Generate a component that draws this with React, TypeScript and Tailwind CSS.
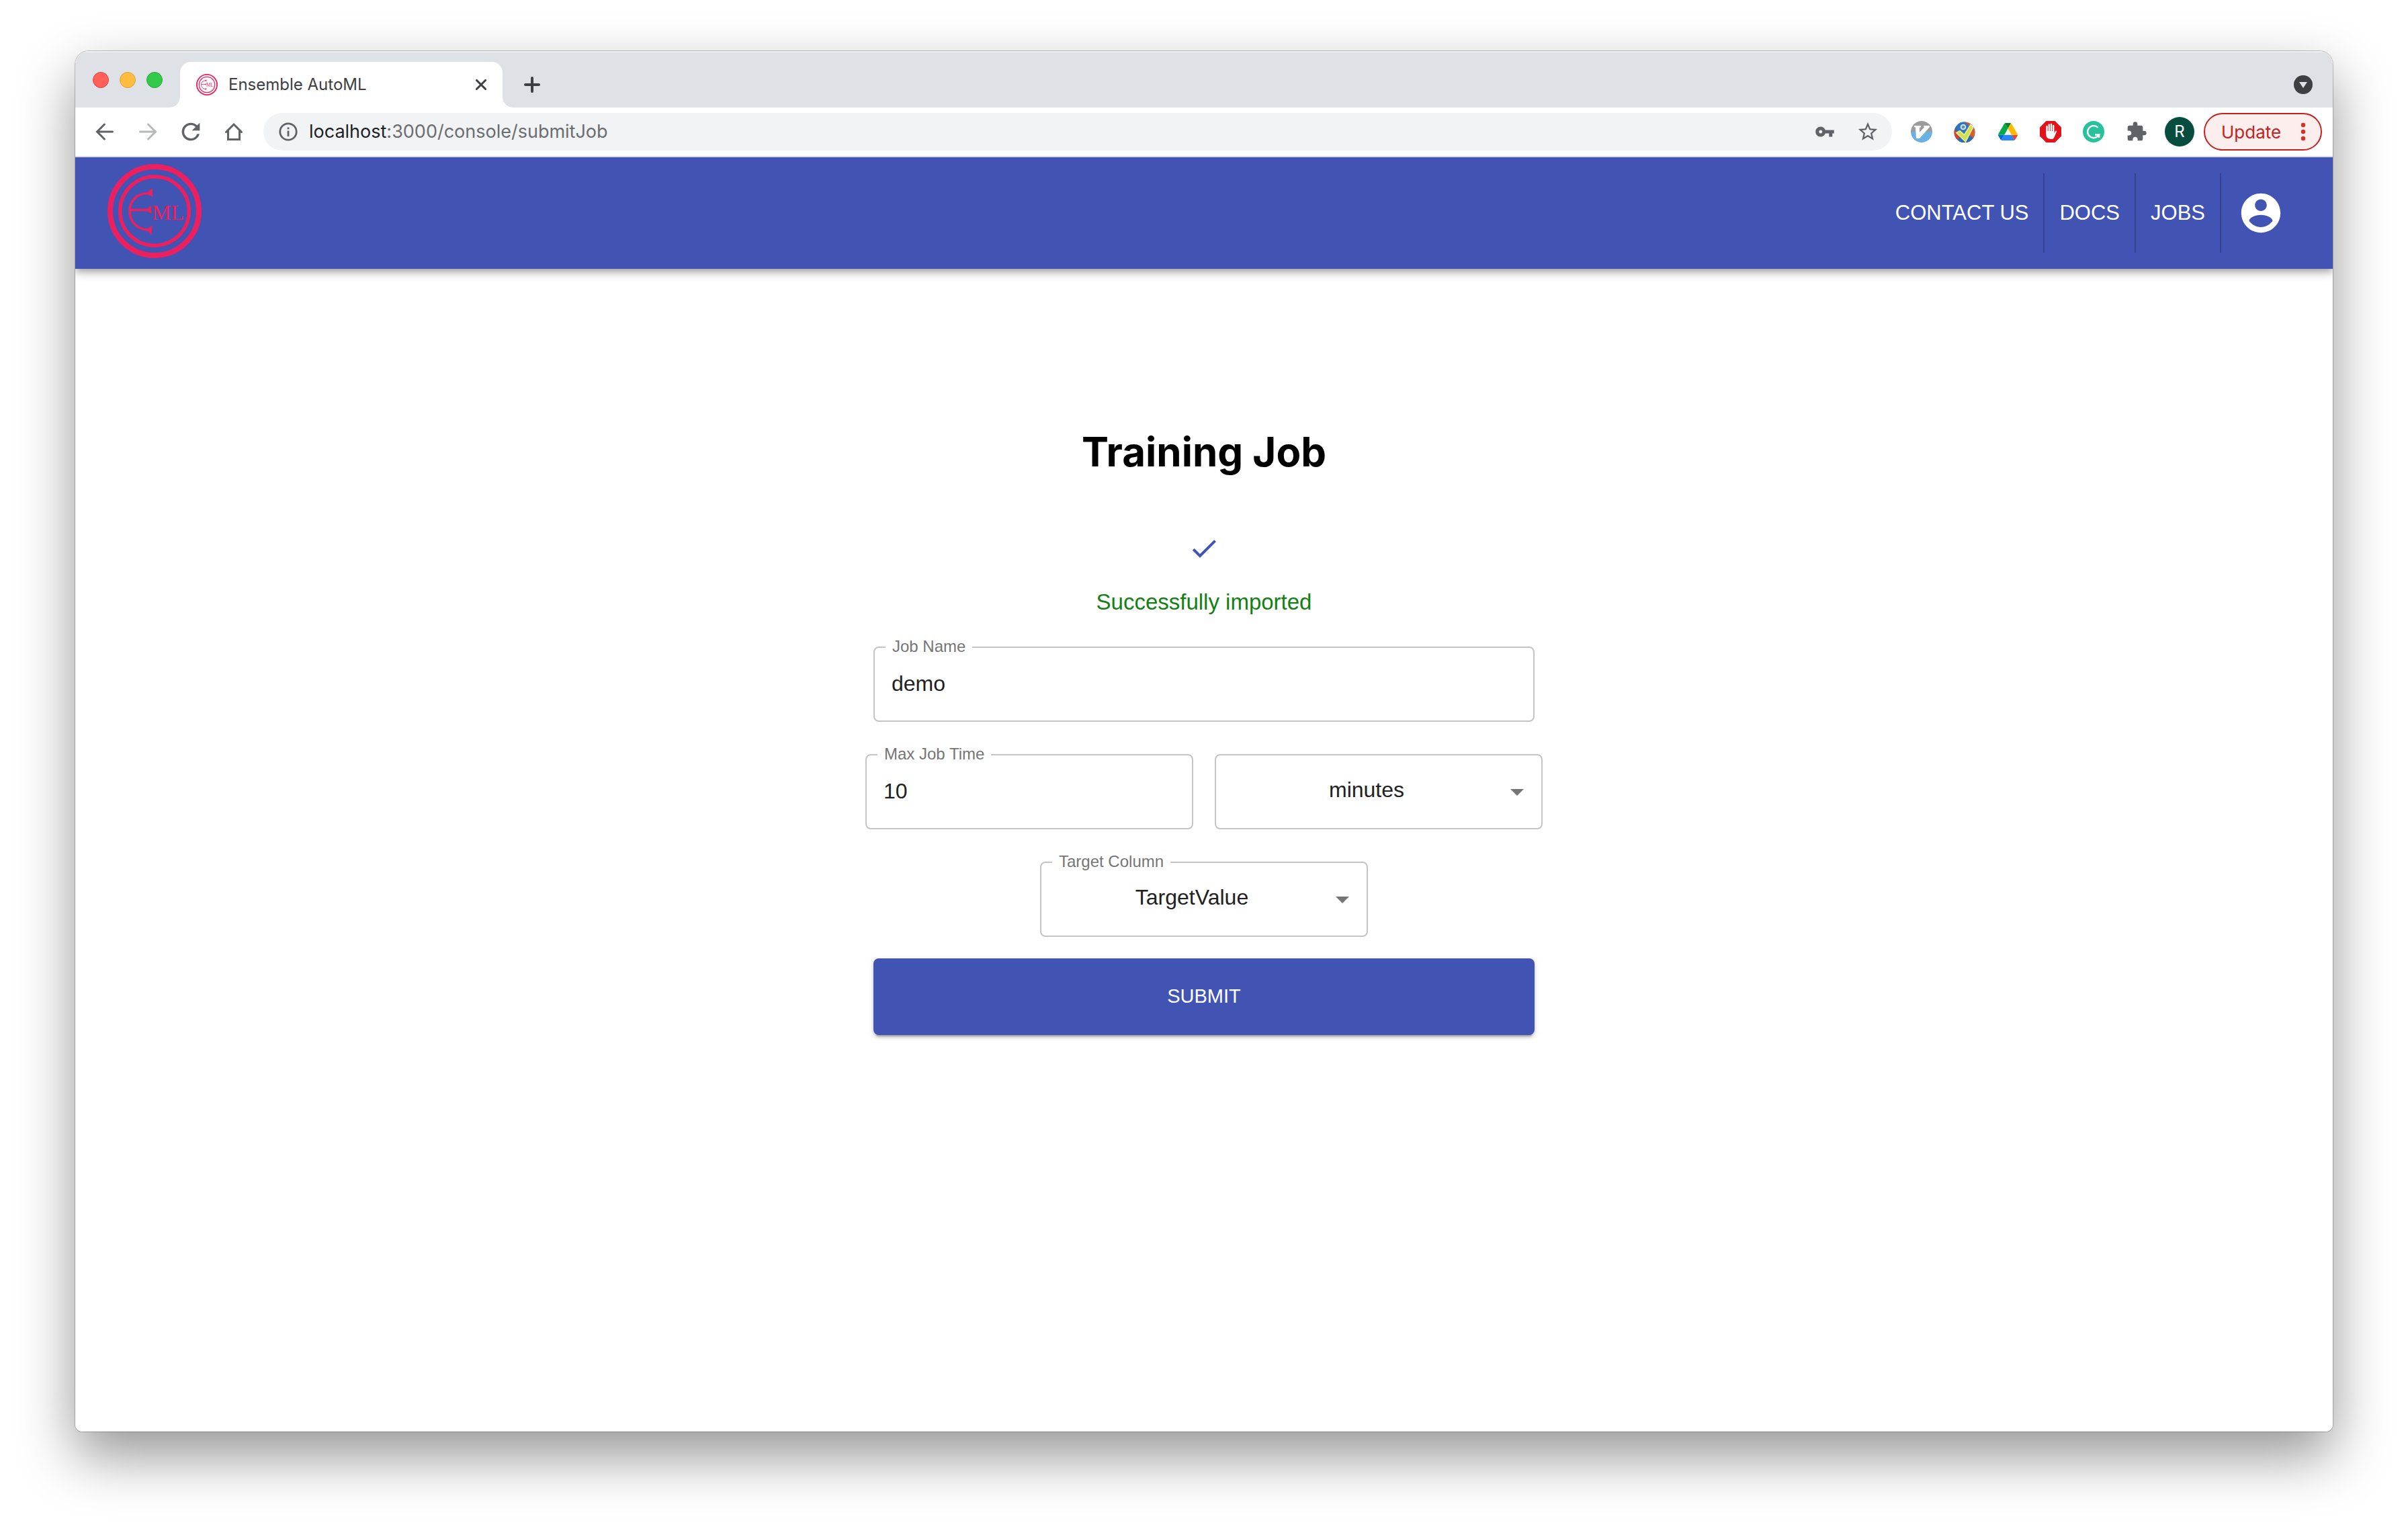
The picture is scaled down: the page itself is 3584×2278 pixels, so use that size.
import { useState } from "react";
import type { ReactNode } from "react";

const EnsembleLogo = ({ className }: { className: string }) => (
  <svg viewBox="0 0 140 140" className={className} fill="none" stroke="#ec205f" aria-label="Ensemble AutoML">
    <circle cx="70" cy="70" r="66" strokeWidth="8" />
    <circle cx="70" cy="70" r="51.300" strokeWidth="5.500" />
    <path d="M61 43.500C42 43.500 33 56 33 70s9 27 27 28" strokeWidth="3.600" />
    <path d="M34 68.500h26" strokeWidth="3.600" />
    <path d="M56 43.500l5-2 5-5 1 12-5-3zM55 68.500l5-2 4-4 1 11-5-3zM55 98l6-2 5-4-1 13-4-5z" fill="#ec205f" strokeWidth="1" />
    <text
      x="66"
      y="83"
      fontSize="32"
      fill="#ec205f"
      stroke="none"
      className="font-['Liberation_Serif',serif]"
    >
      ML
    </text>
  </svg>
);

const Glyph = ({ d, className }: { d: string; className: string }) => (
  <svg viewBox="0 0 24 24" fill="currentColor" className={className} aria-hidden="true">
    <path d={d} />
  </svg>
);

const paths = {
  reload:
    "M17.650 6.350A7.958 7.958 0 0 0 12 4a8 8 0 1 0 7.730 10h-2.080A5.990 5.990 0 0 1 12 18a6 6 0 1 1 0-12c1.660 0 3.140.690 4.220 1.780L13 11h7V4l-2.350 2.350z",
  key: "M12.650 10C11.830 7.670 9.610 6 7 6c-3.310 0-6 2.690-6 6s2.690 6 6 6c2.610 0 4.830-1.670 5.650-4H17v4h4v-4h2v-4H12.650zM7 14c-1.100 0-2-.900-2-2s.900-2 2-2 2 .900 2 2-.900 2-2 2z",
  star: "M22 9.240l-7.190-.620L12 2 9.190 8.630 2 9.240l5.460 4.730L5.820 21 12 17.270 18.180 21l-1.630-7.030L22 9.240zM12 15.400l-3.760 2.270 1-4.280-3.320-2.880 4.380-.380L12 6.100l1.710 4.040 4.380.380-3.320 2.880 1 4.280L12 15.400z",
  puzzle:
    "M20.500 11H19V7c0-1.100-.900-2-2-2h-4V3.500a2.500 2.500 0 0 0-5 0V5H4c-1.100 0-1.990.900-1.990 2v3.800H3.500a2.700 2.700 0 0 1 0 5.400H2V20c0 1.100.900 2 2 2h3.800v-1.500a2.700 2.700 0 0 1 5.400 0V22H17c1.100 0 2-.900 2-2v-4h1.500a2.500 2.500 0 0 0 0-5z",
  account:
    "M12 2C6.480 2 2 6.480 2 12s4.480 10 10 10 10-4.480 10-10S17.520 2 12 2zm0 3c1.660 0 3 1.340 3 3s-1.340 3-3 3-3-1.340-3-3 1.340-3 3-3zm0 14.200c-2.500 0-4.710-1.280-6-3.220.030-1.990 4-3.080 6-3.080 1.990 0 5.970 1.090 6 3.080-1.290 1.940-3.500 3.220-6 3.220z",
  check: "M9 16.170L4.830 12l-1.420 1.410L9 19 21 7l-1.410-1.410z",
};

const StrokeIcon = ({ d }: { d: string }) => (
  <svg viewBox="0 0 28 28" className="size-7" fill="none" stroke="currentColor" strokeWidth="3" strokeLinecap="round">
    <path d={d} />
  </svg>
);

const ToolButton = ({ label, children }: { label: string; children: ReactNode }) => (
  <button type="button" aria-label={label} className="flex size-16 items-center justify-center text-[#5f6368]">
    {children}
  </button>
);

const VimIcon = () => (
  <svg viewBox="0 0 32 32" className="size-8">
    <path d="M0 16a16 16 0 0 1 32 0z" fill="#9c9c9c" />
    <path d="M0 16a16 16 0 0 0 32 0z" fill="#69b1e2" />
    <path d="M5 7h10v2l-2 1v7l7-8-1-2h9v2L13 26H8L7 10 5 9z" fill="#fff" />
  </svg>
);

const CheckerIcon = () => (
  <svg viewBox="0 0 32 32" className="size-8">
    <circle cx="16" cy="17" r="15.500" fill="#2a6cae" />
    <path d="M15 1.500A15.500 15.500 0 0 1 29 25L18 18z" fill="#e2582a" />
    <path d="M1 13a15.500 15.500 0 0 0 5 15l5-7z" fill="#d8402c" />
    <circle cx="13.500" cy="11" r="9.500" fill="#3474b8" />
    <circle cx="14" cy="9" r="3.400" fill="#5b93cc" stroke="#dfeefa" strokeWidth="1.800" />
    <path d="M3.500 17.500l5.500-3 6.500 6L25 5.500l4 3.500-11.500 22z" fill="#cfe04a" stroke="#eef6b0" strokeWidth="1.400" />
  </svg>
);

const DriveIcon = () => (
  <svg viewBox="0 0 87.300 78" className="h-[26px] w-[29px]">
    <path d="m6.600 66.850 3.850 6.650c.8 1.400 1.950 2.500 3.300 3.300l13.750-23.800h-27.500c0 1.550.4 3.100 1.200 4.500z" fill="#0066da" />
    <path d="m43.650 25-13.750-23.800c-1.350.8-2.500 1.900-3.300 3.300l-25.400 44a9.060 9.060 0 0 0 -1.200 4.500h27.500z" fill="#00ac47" />
    <path d="m73.550 76.800c1.350-.8 2.500-1.900 3.300-3.300l1.600-2.750 7.650-13.250c.8-1.400 1.200-2.950 1.200-4.500h-27.502l5.852 11.500z" fill="#ea4335" />
    <path d="m43.650 25 13.750-23.800c-1.350-.8-2.900-1.200-4.500-1.200h-18.500c-1.600 0-3.150.450-4.500 1.200z" fill="#00832d" />
    <path d="m59.800 53h-32.300l-13.750 23.800c1.350.8 2.900 1.200 4.500 1.200h50.800c1.600 0 3.150-.450 4.500-1.200z" fill="#2684fc" />
    <path d="m73.400 26.500-12.700-22c-.8-1.400-1.950-2.500-3.300-3.300l-13.750 23.800 16.150 28h27.450c0-1.550-.4-3.100-1.200-4.500z" fill="#ffba00" />
  </svg>
);

const BlockerIcon = () => (
  <svg viewBox="0 0 32 32" className="size-8">
    <path d="M9.500 0h13L32 9.500v13L22.500 32h-13L0 22.500v-13z" fill="#e4131b" />
    <path d="M10.500 8v11M13.800 5.500V17M17 5v12M20.200 7v11" stroke="#fff" strokeWidth="2.400" strokeLinecap="round" />
    <path d="M9.300 15h12.100v3.500l1.800-3.500c.8-1 2.300-.3 1.800 1l-3.400 8C20.500 26.500 19 27 16.500 27c-4.500 0-7.200-2.500-7.200-7z" fill="#fff" />
  </svg>
);

const GrammarIcon = () => (
  <svg viewBox="0 0 32 32" className="size-8" fill="none" stroke="#fff" strokeWidth="2.400">
    <circle cx="16" cy="16" r="16" fill="#27c29c" stroke="none" />
    <path d="M22.500 9.800A9 9 0 1 0 24 20.500h-6M24.200 25v-5.500" />
  </svg>
);

function TabStrip() {
  return (
    <div className="flex h-[84px] items-end bg-[#dee1e6] pr-[30px] shadow-[inset_0_2px_0_rgba(255,255,255,0.5)]">
      <div className="flex h-[84px] w-[156px] items-center gap-4 pt-0.5 pl-[26px]">
        <button type="button" aria-label="Close window" className="size-6 rounded-full border border-[#e0443e] bg-[#ff605a]" />
        <button type="button" aria-label="Minimize window" className="size-6 rounded-full border border-[#dea035] bg-[#febc40]" />
        <button type="button" aria-label="Zoom window" className="size-6 rounded-full border border-[#1faa35] bg-[#33c94a]" />
      </div>
      <div className="relative flex h-[68px] w-[480px] items-center rounded-t-2xl bg-white pr-5 pl-6">
        <svg viewBox="0 0 16 16" className="absolute bottom-0 -left-4 size-4" fill="#fff">
          <path d="M16 0v16H0A16 16 0 0 0 16 0z" />
        </svg>
        <svg viewBox="0 0 16 16" className="absolute -right-4 bottom-0 size-4" fill="#fff">
          <path d="M0 0v16h16A16 16 0 0 1 0 0z" />
        </svg>
        <EnsembleLogo className="size-8" />
        <span className="ml-4 flex-1 text-2xl text-[#3c4043]">Ensemble AutoML</span>
        <button type="button" aria-label="Close tab" className="flex size-6 items-center justify-center text-[#3c4043]">
          <svg viewBox="0 0 16 16" className="size-4" stroke="currentColor" strokeWidth="3" strokeLinecap="round">
            <path d="M1.500 1.500l13 13M14.500 1.500l-13 13" />
          </svg>
        </button>
      </div>
      <button type="button" aria-label="New tab" className="ml-8 flex h-[68px] w-6 items-center text-[#3c4043]">
        <svg viewBox="0 0 24 24" className="size-6" stroke="currentColor" strokeWidth="4" strokeLinecap="round">
          <path d="M12 2v20M2 12h20" />
        </svg>
      </button>
      <button type="button" aria-label="Search tabs" className="ml-auto flex h-[68px] items-center">
        <svg viewBox="0 0 28 28" className="size-7">
          <circle cx="14" cy="14" r="14" fill="#3c4043" />
          <path d="M8 10h12l-6 9z" fill="#dee1e6" />
        </svg>
      </button>
    </div>
  );
}

function Toolbar() {
  return (
    <div className="flex h-[74px] items-center border-b-2 border-[#dadce0] bg-white pr-4 pl-3">
      <ToolButton label="Back">
        <StrokeIcon d="M25.500 14H3M13.500 3L2.500 14l11 11" />
      </ToolButton>
      <span className="opacity-45">
        <ToolButton label="Forward">
          <StrokeIcon d="M2.500 14H25M14.500 3l11 11-11 11" />
        </ToolButton>
      </span>
      <ToolButton label="Reload"><Glyph d={paths.reload} className="size-10" /></ToolButton>
      <ToolButton label="Home">
        <StrokeIcon d="M2.500 14.500L14 3l11.500 11.500M5.500 13v12.500h17V13" />
      </ToolButton>
      <div className="ml-3 flex h-14 flex-1 items-center rounded-full bg-[#f1f3f4] pr-1 pl-[23px] text-[#5f6368]">
        <svg viewBox="0 0 28 28" className="size-7" fill="none" stroke="currentColor" strokeWidth="2.800">
          <circle cx="14" cy="14" r="12.200" />
          <path d="M14 12.500v8.500M14 7.500v2.800" />
        </svg>
        <div className="ml-[17px] flex-1 text-[27px] leading-10 text-[#6a6d71]">
          <span className="text-[#202124]">localhost</span>:3000/console/submitJob
        </div>
        <ToolButton label="Saved passwords"><Glyph d={paths.key} className="size-[30px]" /></ToolButton>
        <ToolButton label="Bookmark this page"><Glyph d={paths.star} className="size-[34px]" /></ToolButton>
      </div>
      <div className="ml-3 flex items-center">
        <ToolButton label="Vimium"><VimIcon /></ToolButton>
        <ToolButton label="Checker Plus"><CheckerIcon /></ToolButton>
        <ToolButton label="Drive"><DriveIcon /></ToolButton>
        <ToolButton label="Ad blocker"><BlockerIcon /></ToolButton>
        <ToolButton label="Grammar"><GrammarIcon /></ToolButton>
        <ToolButton label="Extensions"><Glyph d={paths.puzzle} className="size-8" /></ToolButton>
      </div>
      <button type="button" className="mx-[10px] flex size-11 items-center justify-center rounded-full bg-[#064d40] text-2xl text-white">
        R
      </button>
      <button type="button" className="ml-1 flex h-14 w-44 items-center justify-between rounded-full border-2 border-[#c5221f] bg-[#fceeed] pr-[22px] pl-6 text-[26px] text-[#c5221f]">
        Update
        <svg viewBox="0 0 8 28" className="h-7 w-2" fill="#d93025">
          <circle cx="4" cy="4" r="3.200" />
          <circle cx="4" cy="14" r="3.200" />
          <circle cx="4" cy="24" r="3.200" />
        </svg>
      </button>
    </div>
  );
}

function SiteHeader() {
  return (
    <header className="relative z-10 flex h-[166px] items-center bg-[#4154b3] pr-[72px] pl-12 font-['Liberation_Sans',Arial,sans-serif] shadow-[0_4px_8px_-2px_rgba(0,0,0,0.2),0_8px_10px_rgba(0,0,0,0.14),0_2px_20px_rgba(0,0,0,0.12)] [clip-path:inset(0_0_-32px_0)]">
      <a href="#home" className="-mt-1.5"><EnsembleLogo className="size-[140px]" /></a>
      <nav className="ml-auto flex h-[118px] items-stretch text-[31px] text-white">
        <a href="#contact" className="flex items-center border-r-2 border-[#34438f] px-[22px]">CONTACT US</a>
        <a href="#docs" className="flex items-center border-r-2 border-[#34438f] px-[22px]">DOCS</a>
        <a href="#jobs" className="flex items-center border-r-2 border-[#34438f] px-[22px]">JOBS</a>
        <button type="button" aria-label="Account" className="ml-6 flex items-center">
          <Glyph d={paths.account} className="size-[70px]" />
        </button>
      </nav>
    </header>
  );
}

const FieldLabel = ({ htmlFor, children }: { htmlFor: string; children: ReactNode }) => (
  <label htmlFor={htmlFor} className="absolute -top-3 left-[18px] bg-white px-[10px] text-2xl leading-6 text-[#757575]">
    {children}
  </label>
);

const fieldBox =
  "h-28 w-full rounded-lg border-2 border-[#c4c4c4] bg-white text-[32px] text-[#212121] outline-none";

type TextFieldProps = { id: string; label: string; value: string; onChange: (value: string) => void };

const TextField = ({ id, label, value, onChange }: TextFieldProps) => (
  <div className="relative w-full">
    <input id={id} value={value} onChange={(e) => onChange(e.target.value)} className={`${fieldBox} px-[25px] pb-0.5`} />
    <FieldLabel htmlFor={id}>{label}</FieldLabel>
  </div>
);

const SelectField = ({ id, label, options }: { id: string; label?: string; options: string[] }) => (
  <div className="relative w-full">
    <select
      id={id}
      aria-label={label ? undefined : "Time unit"}
      className={`${fieldBox} appearance-none pr-[62px] pb-1.5 pl-[26px] [text-align-last:center]`}
    >
      {options.map((option) => (
        <option key={option}>{option}</option>
      ))}
    </select>
    {label && <FieldLabel htmlFor={id}>{label}</FieldLabel>}
    <svg viewBox="0 0 20 10" className="pointer-events-none absolute top-[52px] right-7 h-[10px] w-5" fill="#757575">
      <path d="M0 0h20L10 10z" />
    </svg>
  </div>
);

function TrainingJob() {
  const [name, setName] = useState("demo");
  const [time, setTime] = useState("10");
  return (
    <main className="flex flex-1 flex-col items-center bg-white pt-[232px] font-['Liberation_Sans',Arial,sans-serif]">
      <h1 className="font-['Inter',sans-serif] text-[60px] leading-20 font-bold text-black">Training Job</h1>
      <Glyph d={paths.check} className="mt-20 size-12 text-[#4154b3]" />
      <p className="mt-8 text-[33px] leading-12 text-[#138013]">Successfully imported</p>
      <form className="mt-[42px] flex w-[1008px] max-w-full flex-col items-center" onSubmit={(e) => e.preventDefault()}>
        <div className="w-full px-3">
          <TextField id="job-name" label="Job Name" value={name} onChange={setName} />
        </div>
        <div className="mt-12 grid w-full grid-cols-2 gap-8">
          <TextField id="job-time" label="Max Job Time" value={time} onChange={setTime} />
          <SelectField id="job-unit" options={["minutes", "hours"]} />
        </div>
        <div className="mt-12 w-[488px]">
          <SelectField id="target-column" label="Target Column" options={["TargetValue"]} />
        </div>
        <div className="mt-8 w-full px-3">
          <button
            type="submit"
            className="h-[114px] w-full rounded-lg bg-[#4154b3] text-[29px] text-white shadow-[0_6px_2px_-4px_rgba(0,0,0,0.2),0_4px_4px_rgba(0,0,0,0.14),0_2px_10px_rgba(0,0,0,0.12)]"
          >
            SUBMIT
          </button>
        </div>
      </form>
    </main>
  );
}

export default function App() {
  return (
    <div className="flex min-h-screen flex-col bg-white px-28 pt-[76px] pb-[148px] font-['Inter',sans-serif]">
      <div className="flex flex-1 flex-col rounded-t-[20px] rounded-b-[10px] shadow-[0_0_0_1px_rgba(0,0,0,0.22),0_36px_84px_rgba(0,0,0,0.42)]">
        <div className="flex flex-1 flex-col overflow-hidden rounded-t-[20px] rounded-b-[10px]">
          <TabStrip />
          <Toolbar />
          <SiteHeader />
          <TrainingJob />
        </div>
      </div>
    </div>
  );
}
